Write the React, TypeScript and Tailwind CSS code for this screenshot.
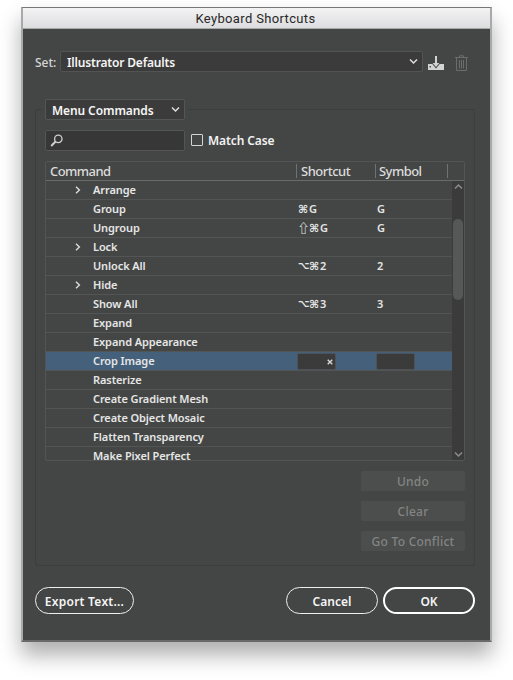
import React from "react";

type Row = { name: string; group?: boolean; mods?: string; sym?: string; selected?: boolean };

const rows: Row[] = [
  { name: "Arrange", group: true },
  { name: "Group", mods: "⌘", sym: "G" },
  { name: "Ungroup", mods: "⇧⌘", sym: "G" },
  { name: "Lock", group: true },
  { name: "Unlock All", mods: "⌥⌘", sym: "2" },
  { name: "Hide", group: true },
  { name: "Show All", mods: "⌥⌘", sym: "3" },
  { name: "Expand" },
  { name: "Expand Appearance" },
  { name: "Crop Image", selected: true },
  { name: "Rasterize" },
  { name: "Create Gradient Mesh" },
  { name: "Create Object Mosaic" },
  { name: "Flatten Transparency" },
  { name: "Make Pixel Perfect" },
];

function Chevron({ className, d = "M1 1.5 4.5 5 8 1.5" }: { className: string; d?: string }) {
  return (
    <svg viewBox="0 0 9 7" className={className} fill="none" stroke="currentColor" strokeWidth="1.5">
      <path d={d} />
    </svg>
  );
}

const glyphStyles: Record<string, string> = {
  "⌘": "w-[10px] font-['DejaVu_Sans'] text-[11px]",
  "⌥": "w-[11px] font-['DejaVu_Sans'] text-[10px]",
  "⇧": "w-[11px] font-['Noto_Sans_CJK_JP'] text-[12px]",
};

function ModifierGlyph({ symbol }: { symbol: string }) {
  return (
    <span className={`flex h-[14px] items-center justify-center font-semibold leading-none tracking-normal ${glyphStyles[symbol]}`}>
      {symbol}
    </span>
  );
}

function CommandRow({ row }: { row: Row }) {
  return (
    <div
      className={`flex h-[19px] shrink-0 items-center border-b border-[#535554] text-[11px] font-semibold tracking-[-0.1px] text-[#e6e6e6] last:h-[13px] last:items-start last:border-b-0 last:pt-[2px] ${
        row.selected ? "bg-[#45607a]" : ""
      }`}
    >
      <div className="flex w-[47px] justify-end pr-[12px]">
        {row.group && (
          <svg viewBox="0 0 6 8" className="h-2 w-1.5" fill="none" stroke="#dcdcdc" strokeWidth="1.4">
            <path d="M1 .7 4.4 4 1 7.3" />
          </svg>
        )}
      </div>
      <div className="w-[205px] whitespace-nowrap leading-[14px]">{row.name}</div>
      {row.selected ? (
        <>
          <div className="-ml-px flex h-[17px] w-[39px] items-center justify-end rounded-[2px] border border-[#4d5256] bg-[#3b3b3b] pr-0.5">
            <svg viewBox="0 0 6 6" className="mt-[2px] h-1.5 w-1.5" stroke="#d8d8d8" strokeWidth="1.4">
              <path d="M.7.7 5.3 5.3M5.3.7.7 5.3" />
            </svg>
          </div>
          <div className="ml-10 h-[17px] w-[39px] rounded-[2px] border border-[#4d5256] bg-[#3b3b3b]" />
        </>
      ) : (
        <>
          <div className="flex w-[79px] items-center">
            {row.mods && [...row.mods].map((m) => <ModifierGlyph key={m} symbol={m} />)}
            <span className="pl-px">{row.sym}</span>
          </div>
          <div>{row.sym}</div>
        </>
      )}
    </div>
  );
}

function SideButton({ label }: { label: string }) {
  return (
    <div className="flex h-5 w-[104px] items-center justify-center rounded-[2px] bg-[#4c4e4d] pt-px text-[12px] font-medium tracking-[0.25px] text-[#838584]">
      {label}
    </div>
  );
}

export default function App() {
  return (
    <div className="h-[680px] w-[513px] overflow-hidden bg-white pl-[21px] pt-[7px] font-['Noto_Sans',sans-serif]">
      <div className="flex h-[635px] w-[471px] flex-col border-x-2 border-t border-b-2 border-x-[#a8aaa9] border-t-[#777] border-b-[#686a69] bg-[#444645] shadow-[0_13px_20px_rgba(0,0,0,0.32)]">
        <div className="flex h-[21px] shrink-0 items-center justify-center border-b border-[#a9a9a9] bg-linear-to-b from-[#f4f3f4] to-[#dddcde] pr-0.5 pt-px font-['Roboto',sans-serif] text-[13px] tracking-[0.35px] text-[#282828]">
          Keyboard Shortcuts
        </div>

        <div className="mt-[22px] flex h-[21px] shrink-0 items-center pl-3">
          <div className="w-[25px] pt-0.5 text-[12px] font-medium text-[#d6d6d6]">Set:</div>
          <div className="flex h-[21px] w-[363px] items-center justify-between rounded-[2px] border border-[#525453] bg-[#3b3b3b] pl-1.5 pr-1 text-[12px] font-semibold tracking-[-0.17px] text-[#f5f5f5]">
            <span className="pt-0.5">Illustrator Defaults</span>
            <Chevron className="h-[7px] w-[9px] text-[#dedede]" />
          </div>
          <svg viewBox="0 0 16 14" className="ml-[5px] mt-[3px] h-3.5 w-4" fill="none">
            <path d="M0 8h16v6H0z" fill="#d3d3d3" />
            <path d="M1.5 10h1.5v1.5H1.5z" fill="#555" />
            <path
              d="M7 0h2v7h2.4L8 11 4.6 7H7z"
              fill="#d3d3d3"
              stroke="#444645"
              strokeWidth="1.8"
              paintOrder="stroke"
            />
          </svg>
          <svg viewBox="0 0 13 17" className="ml-[11px] mt-[4px] h-[17px] w-[13px]" fill="none" stroke="#6b6d6c">
            <path d="M0 2.5h13M4.5 2.5V.8h4v1.7M1.5 3v12.5h10V3M4.5 5v8.5M6.5 5v8.5M8.5 5v8.5" />
          </svg>
        </div>

        <div className="mt-[27px] ml-3 flex h-[21px] shrink-0">
          <div className="mt-[10px] h-[11px] w-[7px] rounded-tl-[3px] border-l border-t border-[#3c3e3d]" />
          <div className="ml-[3px] flex h-[21px] w-[140px] items-center justify-between rounded-[2px] border border-[#545655] bg-[#3b3b3b] pl-1.5 pr-1 text-[12px] font-semibold tracking-[-0.1px] text-[#f5f5f5]">
            <span className="pt-0.5">Menu Commands</span>
            <Chevron className="h-[7px] w-[9px] text-[#dedede]" />
          </div>
          <div className="mt-[10px] ml-[3px] h-[11px] w-[287px] rounded-tr-[3px] border-r border-t border-[#3c3e3d]" />
        </div>

        <div className="ml-3 h-[446px] w-[440px] shrink-0 rounded-b-[3px] border-x border-b border-[#3c3e3d] px-[9px] pt-[10px]">
          <div className="flex h-[21px] items-center">
            <div className="flex h-[21px] w-[140px] items-center rounded-[2px] border border-[#535554] bg-[#373737] pl-1">
              <svg viewBox="0 0 13 13" className="h-[13px] w-[13px]" fill="none" stroke="#d0d0d0">
                <circle cx="8.3" cy="4.9" r="3.7" strokeWidth="1.3" />
                <path d="M5.6 7.5 1.2 12" strokeWidth="1.9" />
              </svg>
            </div>
            <div className="mb-px ml-1.5 h-3 w-3 rounded-[1px] border border-[#d4d4d4]" />
            <div className="ml-[5px] text-[12px] font-semibold tracking-[-0.1px] text-[#f2f2f2]">Match Case</div>
          </div>

          <div className="mt-[10px] flex h-[300px] w-[420px] flex-col overflow-hidden rounded-[2px] border border-[#535554]">
            <div className="flex h-[19px] shrink-0 items-center border-b border-[#6a6c6b] text-[13px] font-medium tracking-[-0.55px] text-[#dcdcdc]">
              <div className="w-[250px] pl-1 pt-px">Command</div>
              <div className="h-[14px] w-[79px] border-l border-[#707271] pl-1 leading-[14px]">
                <span className="tracking-[-0.5px]">Shortcut</span>
              </div>
              <div className="h-[14px] w-[72px] border-l border-[#707271] pl-[3px] leading-[14px]">Symbol</div>
              <div className="h-[14px] border-l border-[#707271]" />
            </div>
            <div className="flex h-[279px]">
              <div className="flex w-[406px] flex-col overflow-hidden">
                {rows.map((row) => (
                  <CommandRow key={row.name} row={row} />
                ))}
              </div>
              <div className="flex w-3 flex-col items-center bg-[#3b3b3b] pt-0.5 pb-0.5 text-[#8c8c8c]">
                <Chevron className="h-[7px] w-[9px]" d="M1 5.5 4.5 2 8 5.5" />
                <div className="mt-[29px] h-[81px] w-[10px] rounded-full bg-[#565857]" />
                <Chevron className="mt-auto h-[7px] w-[9px]" />
              </div>
            </div>
          </div>

          <div className="mt-[10px] flex flex-col items-end gap-[10px]">
            <SideButton label="Undo" />
            <SideButton label="Clear" />
            <SideButton label="Go To Conflict" />
          </div>
        </div>

        <div className="mt-[21px] flex h-[27px] shrink-0 px-3 text-[12px] font-semibold text-[#f5f5f5]">
          <div className="flex w-[99px] items-center justify-center rounded-full border border-[#eeeeee] pt-0.5 tracking-[0.25px]">
            Export Text...
          </div>
          <div className="ml-[152px] flex w-[92px] items-center justify-center rounded-full border border-[#eeeeee] pt-0.5">
            Cancel
          </div>
          <div className="ml-[5px] flex w-[92px] items-center justify-center rounded-full border-2 border-white pt-0.5">
            OK
          </div>
        </div>
      </div>
    </div>
  );
}
